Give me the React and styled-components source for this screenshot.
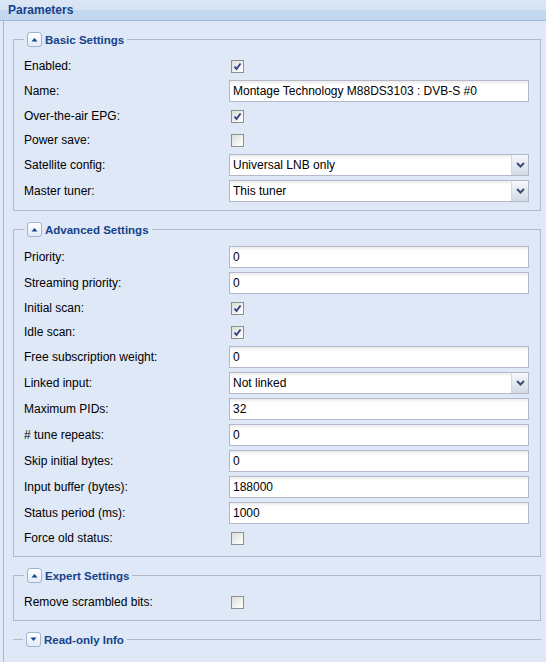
import styled, { createGlobalStyle } from "styled-components";

const GlobalStyle = createGlobalStyle`
  html, body {
    margin: 0;
    padding: 0;
    background: #dfe8f6;
  }
  body {
    font-family: "Liberation Sans", Arial, sans-serif;
    font-size: 12px;
    color: #000;
  }
`

const Panel = styled.div`
  width: 546px;
  height: 662px;
  overflow: hidden;
  background: #dfe8f6;
`

const Header = styled.div`
  height: 20px;
  line-height: 20px;
  padding-left: 8px;
  border-bottom: 1px solid #99bbe8;
  background: linear-gradient(#dbe6f5 0%, #d6e3f4 48%, #c5d8f1 52%, #c3d6f0 100%);
  color: #15428b;
  font-weight: bold;
  font-size: 12px;
`

const Body = styled.div`
  margin-left: 3px;
  border-left: 1px solid #99bbe8;
  padding: 11px 5px 30px 9px;
  background: #dfe8f6;
`

const Fieldset = styled.fieldset`
  margin: 0 0 11px 0;
  padding: 9px 10px 4px 10px;
  border: 1px solid #b5b8c8;
  ${(p) => p.$collapsed && `
    border-left: none;
    border-right: none;
    border-bottom: none;
    padding-bottom: 0;
    padding-top: 0;
  `}
  min-width: 0;
`

const Legend = styled.legend`
  padding: 0 3px;
  height: 15px;
  display: flex;
  align-items: center;
  gap: 3px;
  color: #15428b;
  font-weight: bold;
  font-size: 11.5px;
`

const Toggle = styled.span`
  width: 13px;
  height: 13px;
  border: 1px solid #9fb4d3;
  border-radius: 3px;
  background: linear-gradient(#ffffff, #e3ecf8);
  display: flex;
  align-items: center;
  justify-content: center;
`

const Row = styled.div`
  display: flex;
  align-items: center;
  height: ${(p) => (p.$check ? 20 : 22)}px;
  margin-bottom: 4px;
`

const Label = styled.label`
  width: 205px;
  flex: none;
`

const TextField = styled.div`
  width: 300px;
  height: 22px;
  box-sizing: border-box;
  border: 1px solid #b5b8c8;
  background: linear-gradient(#ececec, #ffffff 4px);
  padding-left: 3px;
  line-height: 20px;
  white-space: nowrap;
  overflow: hidden;
`

const Combo = styled.div`
  width: 300px;
  height: 22px;
  box-sizing: border-box;
  border: 1px solid #b5b8c8;
  display: flex;
  background: linear-gradient(#ececec, #ffffff 4px);
`

const ComboText = styled.div`
  flex: 1;
  padding-left: 3px;
  line-height: 20px;
`

const Trigger = styled.div`
  width: 16px;
  border-left: 1px solid #d3d9e2;
  background: linear-gradient(#f4f7fb, #e2e8f0 55%, #d3dae4);
  display: flex;
  align-items: center;
  justify-content: center;
`

const Box = styled.span`
  margin-left: 2px;
  width: 11px;
  height: 11px;
  border: 1px solid #8e8f8f;
  background: linear-gradient(135deg, #dcdcd6, #f6f6f4 70%, #ffffff);
  display: flex;
  align-items: center;
  justify-content: center;
`

function Arrow({ up }) {
  return (
    <svg width="7" height="5" viewBox="0 0 7 5">
      {up ? (
        <path d="M0.5 4.5 L3.5 1 L6.5 4.5 Z" fill="#15428b" />
      ) : (
        <path d="M0.5 0.5 L3.5 4 L6.5 0.5 Z" fill="#15428b" />
      )}
    </svg>
  )
}

function Checkbox({ checked }) {
  return (
    <Box>
      {checked && (
        <svg width="9" height="9" viewBox="0 0 9 9">
          <path d="M1.5 4.5 L3.5 7 L7.5 1.5" fill="none" stroke="#2c3a8c" strokeWidth="1.8" />
        </svg>
      )}
    </Box>
  )
}

function Chevron() {
  return (
    <svg width="9" height="6" viewBox="0 0 9 6">
      <path d="M1 1 L4.5 4.5 L8 1" fill="none" stroke="#3b4d70" strokeWidth="2" />
    </svg>
  )
}

function Field({ item }) {
  if (item.type === "check") {
    return (
      <Row $check>
        <Label>{item.label}</Label>
        <Checkbox checked={item.value} />
      </Row>
    )
  }
  if (item.type === "combo") {
    return (
      <Row>
        <Label>{item.label}</Label>
        <Combo>
          <ComboText>{item.value}</ComboText>
          <Trigger><Chevron /></Trigger>
        </Combo>
      </Row>
    )
  }
  return (
    <Row>
      <Label>{item.label}</Label>
      <TextField>{item.value}</TextField>
    </Row>
  )
}

function Section({ title, items, collapsed }) {
  return (
    <Fieldset $collapsed={collapsed}>
      <Legend>
        <Toggle><Arrow up={!collapsed} /></Toggle>
        {title}
      </Legend>
      {!collapsed && items.map((item) => <Field key={item.label} item={item} />)}
    </Fieldset>
  )
}

const basic = [
  { label: "Enabled:", type: "check", value: true },
  { label: "Name:", type: "text", value: "Montage Technology M88DS3103 : DVB-S #0" },
  { label: "Over-the-air EPG:", type: "check", value: true },
  { label: "Power save:", type: "check", value: false },
  { label: "Satellite config:", type: "combo", value: "Universal LNB only" },
  { label: "Master tuner:", type: "combo", value: "This tuner" },
]

const advanced = [
  { label: "Priority:", type: "text", value: "0" },
  { label: "Streaming priority:", type: "text", value: "0" },
  { label: "Initial scan:", type: "check", value: true },
  { label: "Idle scan:", type: "check", value: true },
  { label: "Free subscription weight:", type: "text", value: "0" },
  { label: "Linked input:", type: "combo", value: "Not linked" },
  { label: "Maximum PIDs:", type: "text", value: "32" },
  { label: "# tune repeats:", type: "text", value: "0" },
  { label: "Skip initial bytes:", type: "text", value: "0" },
  { label: "Input buffer (bytes):", type: "text", value: "188000" },
  { label: "Status period (ms):", type: "text", value: "1000" },
  { label: "Force old status:", type: "check", value: false },
]

const expert = [
  { label: "Remove scrambled bits:", type: "check", value: false },
]

export default function App() {
  return (
    <Panel>
      <GlobalStyle />
      <Header>Parameters</Header>
      <Body>
        <Section title="Basic Settings" items={basic} />
        <Section title="Advanced Settings" items={advanced} />
        <Section title="Expert Settings" items={expert} />
        <Section title="Read-only Info" items={[]} collapsed />
      </Body>
    </Panel>
  )
}
